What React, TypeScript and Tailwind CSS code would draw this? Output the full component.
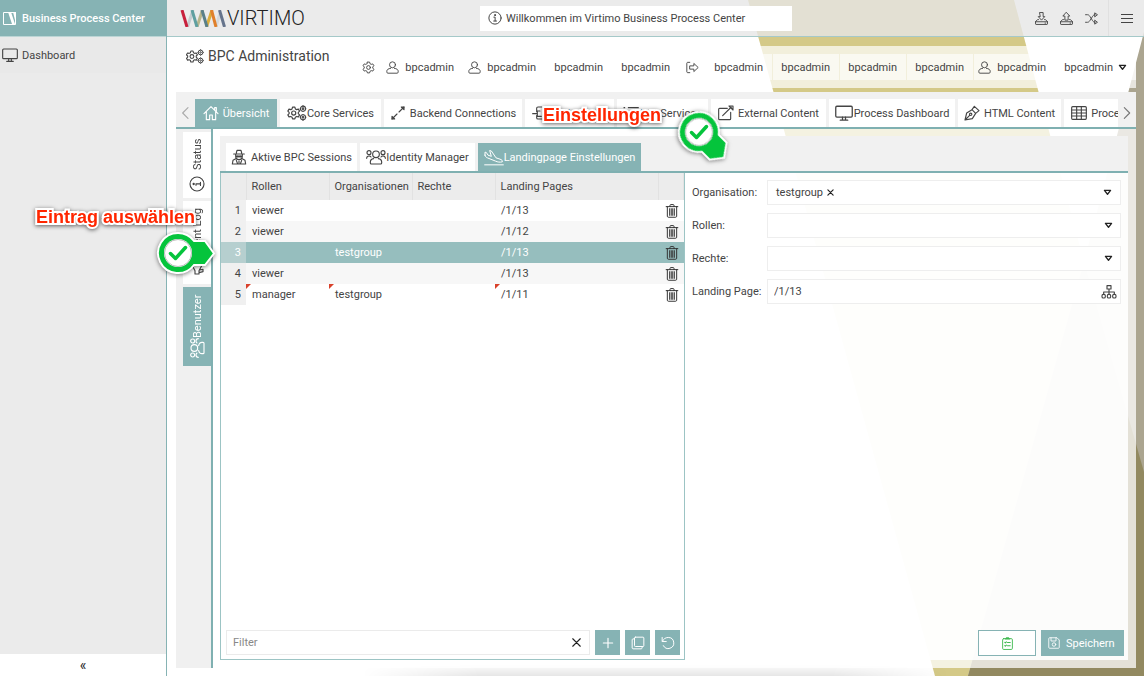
import { useState } from 'react';
import type { ReactNode } from 'react';

type IconProps = { className?: string; children?: ReactNode };

// base for all line icons, 24er grid
const Svg = ({ className = 'size-4', children }: IconProps) => (
    <svg viewBox="0 0 24 24" fill="none" stroke="currentColor" strokeWidth="1.7" strokeLinecap="round" strokeLinejoin="round" className={`shrink-0 ${className}`} aria-hidden="true">
        {children}
    </svg>
);

const GEAR = 'M10 2h4l.8 3 2.2 1.2 3-.8 2 3.4-2.2 2.2v2l2.2 2.2-2 3.4-3-.8-2.2 1.2-.8 3h-4l-.8-3L7 17.800l-3 .8-2-3.400L4.200 13v-2L2 8.800l2-3.400 3 .8L9.200 5z';

const Gear = ({ className }: IconProps) => (
    <Svg className={className}>
        <path d={GEAR} />
        <circle cx="12" cy="12" r="3.5" />
    </Svg>
);

const Gears = ({ className = 'h-4 w-[19px]' }: IconProps) => (
    <svg viewBox="0 0 29 24" fill="none" stroke="currentColor" strokeWidth="1.600" strokeLinejoin="round" className={`shrink-0 ${className}`} aria-hidden="true">
        <g transform="translate(-1 1.500) scale(.88)">
            <path d={GEAR} strokeWidth="2" />
            <circle cx="12" cy="12" r="3.5" strokeWidth="2" />
        </g>
        <circle cx="23.500" cy="5.500" r="3.800" />
        <circle cx="23.500" cy="5.500" r="1.200" />
        <circle cx="23.500" cy="18.500" r="3.800" />
        <circle cx="23.500" cy="18.500" r="1.200" />
        <path d="M23.500.5v1.500M23.500 9v1.500M18.500 5.500H20M27 5.500h1.500M23.500 13.500V15M23.500 22v1.500M18.500 18.500H20M27 18.500h1.500" />
    </svg>
);

const User = ({ className }: IconProps) => (
    <Svg className={className}>
        <circle cx="12" cy="7" r="5.500" />
        <path d="M8.500 13.500C4 14 1.500 16 1.500 19v1.500c0 1.200.8 2 2 2h17c1.200 0 2-.8 2-2V19c0-3-2.500-5-7-5.500" />
    </Svg>
);

const Users = ({ className = 'h-4 w-5' }: IconProps) => (
    <svg viewBox="0 0 30 24" fill="none" stroke="currentColor" strokeWidth="1.700" strokeLinecap="round" className={`shrink-0 ${className}`} aria-hidden="true">
        <circle cx="15" cy="8" r="5" />
        <circle cx="4.500" cy="5.500" r="3" />
        <circle cx="25.500" cy="5.500" r="3" />
        <path d="M11.500 14.500c-3.500.5-5 2.500-5 5V21c0 1 .6 1.500 1.500 1.500h14c.9 0 1.500-.5 1.500-1.500v-1.500c0-2.500-1.500-4.500-5-5M1 14c0-2 1.200-3.500 3.500-3.500 1.300 0 2.300.5 3 1.500M29 14c0-2-1.200-3.500-3.500-3.500-1.300 0-2.300.5-3 1.500" />
    </svg>
);

const Monitor = ({ className }: IconProps) => (
    <Svg className={className}>
        <rect x="1" y="3" width="22" height="14.500" rx="1.500" />
        <path d="M10 17.500v3.500M14 17.500v3.500M7 21.500h10" />
    </Svg>
);

const House = ({ className }: IconProps) => (
    <Svg className={className}>
        <path d="M1.500 13L12 2.500 22.500 13M5 10v12h5v-7h4v7h5V10M17.500 7.500V4h2.500v6" />
    </Svg>
);

const Arrows = ({ className }: IconProps) => (
    <Svg className={className}>
        <path d="M3 21l7.500-7.500M13.500 10.500L21 3" />
        <path d="M17 3h4v4zM3 17v4h4z" fill="currentColor" />
    </Svg>
);

const Plug = ({ className }: IconProps) => (
    <Svg className={className}>
        <path d="M1 13h6M9 3h10v18H9c-1.500 0-2-1-2-2v-3M7 10V5c0-1.200.5-2 2-2M12 9H8v8h6" />
    </Svg>
);

const List = ({ className }: IconProps) => (
    <Svg className={className}>
        <path d="M8 4h15M8 12h15M8 20h15M1.500 4h1M1.500 12h1M1.500 20h1" />
    </Svg>
);

const External = ({ className }: IconProps) => (
    <Svg className={className}>
        <path d="M14 5H2.500C1.700 5 1 5.700 1 6.500v14c0 .8.700 1.500 1.500 1.500h15c.8 0 1.500-.7 1.500-1.500V11M7 16L20 3" />
        <path d="M16.500 1.500h6v6z" />
    </Svg>
);

const Pen = ({ className }: IconProps) => (
    <Svg className={className}>
        <path d="M1.500 22.500L4 12l8-5 5.500 5.500-5 8zM1.500 22.500l7-7M12 7l3.500-5 7 6.500-5 4" />
        <circle cx="10" cy="14" r="1.800" />
    </Svg>
);

const TableGrid = ({ className }: IconProps) => (
    <Svg className={className}>
        <rect x="1" y="2.500" width="22" height="19" rx="1.500" />
        <path d="M1 7.500h22M1 12h22M1 16.500h22M8.500 2.500v19M15.500 2.500v19" />
    </Svg>
);

const Spy = ({ className }: IconProps) => (
    <Svg className={className}>
        <path d="M8 6l1-4h6l1 4M4 7.500h16M7 8v3c0 3 2 5 5 5s5-2 5-5V8M7 11h10M8.500 14L3 17l-1 5.500h20L21 17l-5.500-3M8 17l2 5.500M16 17l-2 5.500M12 18v4" />
        <path d="M8.500 10.500h2.500v1.500H8.500zM13 10.500h2.500v1.500H13z" fill="currentColor" />
    </Svg>
);

const Plane = ({ className = 'h-[17px] w-5' }: IconProps) => (
    <svg viewBox="0 0 30 24" fill="none" stroke="currentColor" strokeWidth="1.500" strokeLinecap="round" strokeLinejoin="round" className={`shrink-0 ${className}`} aria-hidden="true">
        <path d="M1 23h28M1.500 8.500V4l2 .5 2.500 4 5 1.800L8.500 1.500l2.500.7 7 10.300 6 2c3 1 4 2.300 3.500 4-4 1-7 .3-10-1L5 12.500c-2-.8-3-2-3.500-4z" />
    </svg>
);

const Info = ({ className }: IconProps) => (
    <Svg className={className}>
        <circle cx="12" cy="12" r="10.500" />
        <path d="M10 10.500h2.200V17M9.800 17.200h4.800" />
        <circle cx="12" cy="7" r=".9" fill="currentColor" />
    </Svg>
);

const Megaphone = ({ className }: IconProps) => (
    <Svg className={className}>
        <path d="M3 9h5l11-6v18l-11-6H3zM5 15l1.500 6H10l-1-5M19 9c3 0 3 6 0 6" />
    </Svg>
);

const Inbox = ({ className, up }: IconProps & { up?: boolean }) => (
    <Svg className={className}>
        <path d="M6.500 14H5l-4 3.500V22c0 .6.400 1 1 1h20c.6 0 1-.4 1-1v-4.500L19 14h-1.500M1 18h22M18.500 20.500h1" />
        {up ? <path d="M12 1l6 6.500h-3V15H9V7.500H6z" /> : <path d="M9 1h6v7.500h3L12 15 6 8.500h3z" />}
    </Svg>
);

const Shuffle = ({ className }: IconProps) => (
    <Svg className={className}>
        <path d="M1 5h3.500c2 0 3 1 4.500 3l5 8c1.300 2 2.500 3 4.500 3M1 19h3.500c2 0 3-1 4.500-3l5-8c1.300-2 2.500-3 4.500-3" />
        <path d="M18.500 2L23 5l-4.500 3.500zM18.500 15.500L23 19l-4.500 3z" />
    </Svg>
);

const Logout = ({ className }: IconProps) => (
    <Svg className={className}>
        <path d="M7 2.500H3c-.8 0-1.500.7-1.500 1.500v16c0 .8.700 1.500 1.500 1.500h4M7.500 9h7V4.500L22.500 12l-8 7.500V15h-7z" />
    </Svg>
);

const Trash = ({ className }: IconProps) => (
    <Svg className={className}>
        <path d="M2 4.500h20M4 4.500V21c0 1 .7 1.700 1.700 1.700h12.600c1 0 1.700-.7 1.700-1.700V4.500M8.500 4.500V2.500c0-.9.600-1.500 1.500-1.500h4c.9 0 1.500.6 1.500 1.500v2M8 8v11.500M10.700 8v11.500M13.300 8v11.500M16 8v11.500" />
    </Svg>
);

const Sitemap = ({ className }: IconProps) => (
    <Svg className={className}>
        <path d="M9 2.500h6v5H9zM12 7.500v8M4 15.500v-3.500h16v3.500" />
        <rect x="1.500" y="15.500" width="5" height="5.500" rx="2" />
        <rect x="9.500" y="15.500" width="5" height="5.500" rx="2" />
        <rect x="17.500" y="15.500" width="5" height="5.500" rx="2" />
    </Svg>
);

const Triangle = () => (
    <svg viewBox="0 0 10 8" className="h-[7px] w-[9px] shrink-0" fill="none" stroke="#222" strokeWidth="1.500" strokeLinejoin="round" aria-hidden="true">
        <path d="M1.500 1.500h7L5 6z" />
    </svg>
);

const Cross = ({ className }: IconProps) => (
    <Svg className={className}>
        <path d="M3 3l18 18M21 3L3 21" strokeWidth="4" />
    </Svg>
);

// green check pin, the tip points to the right
const CheckPin = ({ className = '' }: IconProps) => (
    <svg viewBox="0 0 60 44" className={`pointer-events-none absolute h-11 w-[60px] drop-shadow-[0_1px_2px_rgba(0,0,0,0.5)] ${className}`} aria-hidden="true">
        <path d="M22 2a20 20 0 1 0 16 32h11l9-11.500L49 10H38A20 20 0 0 0 22 2z" fill="#05c43c" stroke="#fff" strokeWidth="2" />
        <circle cx="22" cy="22" r="14" fill="#fff" />
        <circle cx="22" cy="22" r="13.500" fill="none" stroke="#bbb" strokeWidth="1" />
    </svg>
);

const CheckMark = ({ className = '' }: IconProps) => (
    <svg viewBox="0 0 20 16" className={`pointer-events-none absolute h-4 w-5 ${className}`} fill="none" stroke="#05c43c" strokeWidth="3.500" strokeLinecap="round" strokeLinejoin="round" aria-hidden="true">
        <path d="M2.500 8.500L7.500 13.500 17.500 2.500" />
    </svg>
);

const Note = ({ className, children }: IconProps) => (
    <span className={`pointer-events-none absolute whitespace-nowrap font-['Liberation_Sans',Arial,sans-serif] text-lg leading-6 font-bold text-[#ff2600] [paint-order:stroke_fill] [-webkit-text-stroke:4px_#fff] drop-shadow-[0_1px_2px_rgba(0,0,0,0.6)] ${className}`}>
        {children}
    </span>
);

const modules = [
    { name: 'Übersicht', icon: <House className="size-4" />, width: 'w-[82px]', gap: 'gap-1' },
    { name: 'Core Services', icon: <Gears className="h-4 w-5" />, width: 'w-[101px]', gap: '' },
    { name: 'Backend Connections', icon: <Arrows className="size-4" />, width: 'w-[138px]', gap: 'gap-1' },
    { name: 'Deployment', icon: <Plug className="size-4" />, width: 'w-[89px]', gap: '' },
    { name: 'Log Services', icon: <List className="size-4" />, width: 'w-[91px]', gap: '' },
    { name: 'External Content', icon: <External className="size-4" />, width: 'w-[115px]', gap: 'gap-1' },
    { name: 'Process Dashboard', icon: <Monitor className="size-[18px]" />, width: 'w-[126px]', gap: 'gap-px' },
    { name: 'HTML Content', icon: <Pen className="size-4" />, width: 'w-[103px]', gap: 'gap-1' },
    { name: 'Process Monitoring', icon: <TableGrid className="size-4" />, width: 'w-[130px]', gap: 'gap-1' },
];

const userTabs = [
    { name: 'Aktive BPC Sessions', icon: <Spy className="size-4" />, width: 'w-[131px]', gap: 'gap-1' },
    { name: 'Identity Manager', icon: <Users className="h-4 w-5" />, width: 'w-[115px]', gap: '' },
    { name: 'Landingpage Einstellungen', icon: <Plane />, width: 'w-[163px]', gap: '' },
];

const rows = [
    { role: 'viewer', org: '', page: '/1/13', dirty: false },
    { role: 'viewer', org: '', page: '/1/12', dirty: false },
    { role: '', org: 'testgroup', page: '/1/13', dirty: false },
    { role: 'viewer', org: '', page: '/1/13', dirty: false },
    { role: 'manager', org: 'testgroup', page: '/1/11', dirty: true },
];

type TabProps = { tab: (typeof modules)[number]; active: boolean; onClick?: () => void };

const Tab = ({ tab, active, onClick }: TabProps) => (
    <button
        type="button"
        onClick={onClick}
        className={`flex h-7 shrink-0 items-center justify-center whitespace-nowrap ${tab.width} ${tab.gap} ${active ? 'bg-[#86b3b4] text-white' : 'bg-white'}`}
    >
        {tab.icon}
        {tab.name}
    </button>
);

const barCell = 'flex h-[26px] items-center justify-end bg-white/60';

const UserCell = () => (
    <button type="button" className={`${barCell} w-[81px] gap-[6px] pr-[9px]`}>
        <User className="size-[13px]" />
        bpcadmin
    </button>
);

const TextCell = () => (
    <button type="button" className={`${barCell} w-[66px] pr-[9px]`}>bpcadmin</button>
);

const Mark = () => (
    <svg viewBox="0 0 5 5" className="absolute top-0 left-0 size-[5px]" aria-hidden="true">
        <path d="M0 0h5L0 5z" fill="#d9412b" />
    </svg>
);

const fieldBox = 'h-[25px] w-full border border-[#eeeeee] bg-white px-[6px] outline-none';

const SelectField = ({ id, label }: { id: string; label: string }) => (
    <div className="flex items-center">
        <label htmlFor={id} className="w-[75px] shrink-0">{label}</label>
        <div className="relative flex-1">
            <select id={id} className={`${fieldBox} block appearance-none`} defaultValue="">
                <option value=""></option>
            </select>
            <span className="pointer-events-none absolute inset-y-0 right-2 flex items-center"><Triangle /></span>
        </div>
    </div>
);

const App = () => {
    const [activeModule, setActiveModule] = useState('Übersicht');
    const [activeTab, setActiveTab] = useState('Landingpage Einstellungen');
    const [selected, setSelected] = useState(2);
    const [filter, setFilter] = useState('');

    return (
        <div className="relative flex min-h-screen overflow-hidden bg-white font-[Roboto,sans-serif] text-[11px] leading-[17px] text-[#444]">
            {/* sidebar */}
            <aside className="flex w-[167px] shrink-0 flex-col border-r border-[#86b3b4] bg-[#ebebeb]">
                <div className="flex h-9 items-center gap-[6px] bg-[#86b3b4] pl-[3px] font-medium text-white">
                    <svg viewBox="0 0 13 13" className="size-[13px]" aria-hidden="true">
                        <path d="M.5.500h12v12H.5z" fill="none" stroke="#fff" />
                        <path d="M5 0h3l4 12H9zM10 0h3v12z" fill="#fff" />
                    </svg>
                    Business Process Center
                </div>
                <nav className="border-t border-[#bcd5d5]">
                    <a href="#dashboard" className="flex h-9 items-center gap-1 bg-[#e9e9e9] pl-[2px]">
                        <Monitor className="size-4" />
                        Dashboard
                    </a>
                </nav>
                <button type="button" className="mt-auto h-[22px] bg-white text-sm text-[#222]">«</button>
            </aside>

            <div className="relative isolate flex min-w-0 flex-1 flex-col">
                {/* background shapes */}
                <svg viewBox="0 0 977 676" preserveAspectRatio="none" className="absolute inset-0 -z-10 h-full w-full" aria-hidden="true">
                    <path d="M581 0h266l70 262-116 414h-33z" fill="#d4c987" />
                    <path d="M977 32v644H801l116-414z" fill="#aba590" />
                    <path d="M917 262l60 210v204H801z" fill="#928960" />
                </svg>
                <div className="absolute bottom-0 left-[20%] -z-10 h-3 w-3/5 bg-linear-to-b from-transparent to-black/10 [mask-image:linear-gradient(to_right,transparent,black_20%,black_80%,transparent)]" />

                <header className="flex h-[37px] items-center justify-between border-b border-[#a5c9c9] bg-[#e6e6e6]/80">
                    <div className="flex w-[313px] items-center gap-px pl-[13px]">
                        <svg viewBox="0 0 46 17" className="h-[17px] w-[46px]" fill="none" strokeWidth="3" aria-hidden="true">
                            <path d="M7.500 17L13 0" stroke="#c3ccd0" />
                            <path d="M2 0l5 17" stroke="#c8203c" />
                            <path d="M17 17L22.500 0" stroke="#b8b68c" />
                            <path d="M12 0l5 17" stroke="#5f9fa0" />
                            <path d="M26.500 17L32 0" stroke="#dcae3c" />
                            <path d="M22 0l5 17" stroke="#5a8088" />
                            <path d="M36 17L40 3" stroke="#d5dade" />
                            <path d="M31.500 0l4.500 17" stroke="#e0802c" />
                            <path d="M39.500 0l5 17" stroke="#66748c" />
                        </svg>
                        <span className="text-xl font-light text-[#222]">VIRTIMO</span>
                    </div>
                    <div className="flex h-[25px] w-[312px] items-center gap-1 bg-white pl-2">
                        <Info className="size-[14px]" />
                        Willkommen im Virtimo Business Process Center
                    </div>
                    <div className="flex flex-1 items-center justify-end">
                        <button type="button" aria-label="Import" className="px-[6px]"><Inbox className="size-[13px]" /></button>
                        <button type="button" aria-label="Export" className="px-[6px]"><Inbox up className="size-[13px]" /></button>
                        <button type="button" aria-label="Wechseln" className="px-[6px]"><Shuffle className="size-[13px]" /></button>
                        <button type="button" aria-label="Menü" className="ml-1 flex h-9 w-9 items-center justify-center border-l border-[#e0e0e0]">
                            <svg viewBox="0 0 12 11" className="h-[11px] w-3" stroke="currentColor" aria-hidden="true">
                                <path d="M0 1.500h12M0 5.500h12M0 9.500h12" />
                            </svg>
                        </button>
                    </div>
                </header>

                {/* title and toolbar */}
                <div className="mx-2 mt-[9px] mb-1 flex h-[42px] items-start justify-between bg-white/70 pl-[11px]">
                    <h1 className="flex items-center gap-1 whitespace-nowrap text-sm leading-5">
                        <Gears className="h-[15px] w-[18px]" />
                        BPC Administration
                    </h1>
                    <div className="mt-2 flex gap-px">
                        <button type="button" aria-label="Einstellungen" className={`${barCell} w-6 pr-[6px]`}><Gear className="size-[13px]" /></button>
                        <UserCell />
                        <UserCell />
                        <TextCell />
                        <TextCell />
                        <button type="button" aria-label="Abmelden" className={`${barCell} w-[25px] pr-[6px]`}><Logout className="size-[13px]" /></button>
                        <TextCell />
                        <TextCell />
                        <TextCell />
                        <TextCell />
                        <UserCell />
                        <button type="button" className={`${barCell} w-20 gap-[5px] pr-[9px]`}>
                            bpcadmin
                            <Triangle />
                        </button>
                    </div>
                </div>

                <div className="mx-2 mb-2 ml-[9px] flex flex-1 flex-col bg-white/75">
                    {/* modules */}
                    <div className="flex h-[37px] items-end border-b-2 border-[#7fb0b1] bg-[#f1f1f1]">
                        <button type="button" aria-label="Zurück" className="flex h-7 w-[19px] shrink-0 items-center justify-center text-[#aaa]">
                            <Svg className="size-4"><path d="M15 4l-8 8 8 8" /></Svg>
                        </button>
                        <div className="flex min-w-0 flex-1 gap-[3px] overflow-hidden">
                            {modules.map((m) => (
                                <Tab key={m.name} tab={m} active={m.name === activeModule} onClick={() => setActiveModule(m.name)} />
                            ))}
                        </div>
                        <button type="button" aria-label="Weiter" className="flex h-7 w-[18px] shrink-0 items-center justify-center text-[#777]">
                            <Svg className="size-4"><path d="M8 4l8 8-8 8" /></Svg>
                        </button>
                    </div>

                    <div className="flex flex-1">
                        {/* vertical tabs */}
                        <div className="flex w-[37px] shrink-0 flex-col items-end gap-[3px] border-r-2 border-[#7fb0b1] bg-[#f0f0f0] pt-[3px]">
                            <button type="button" className="flex h-[66px] w-7 rotate-180 items-center justify-center gap-[6px] bg-white [writing-mode:vertical-rl]">
                                <Info className="size-4 rotate-90" />
                                Status
                            </button>
                            <button type="button" className="flex h-[83px] w-7 rotate-180 items-center justify-center gap-1 bg-white [writing-mode:vertical-rl]">
                                <Megaphone className="size-4 rotate-90" />
                                Event Log
                            </button>
                            <button type="button" className="flex h-[79px] w-7 rotate-180 items-center justify-center bg-[#86b3b4] text-white [writing-mode:vertical-rl]">
                                <Users className="size-5 rotate-90" />
                                Benutzer
                            </button>
                        </div>

                        <div className="mt-[7px] mr-2 mb-2 ml-[7px] flex min-w-0 flex-1 flex-col bg-white/90">
                            <div className="flex h-[37px] items-end gap-[3px] border-b-2 border-[#7fb0b1] bg-[#f1f1f1] pl-[6px]">
                                {userTabs.map((t) => (
                                    <Tab key={t.name} tab={t} active={t.name === activeTab} onClick={() => setActiveTab(t.name)} />
                                ))}
                            </div>

                            <div className="flex flex-1">
                                {/* grid */}
                                <section className="flex w-[465px] max-w-[60%] shrink-0 flex-col border border-t-0 border-[#9cc4c4] bg-white">
                                    <table className="w-full table-fixed text-left">
                                        <thead>
                                            <tr className="h-[27px] bg-[#ececec] [&>th]:border-r [&>th]:border-[#e2e2e2] [&>th]:pl-[5px] [&>th]:font-normal">
                                                <th className="w-[25px]"></th>
                                                <th className="w-[83px]">Rollen</th>
                                                <th className="w-[83px]">Organisationen</th>
                                                <th className="w-[83px]">Rechte</th>
                                                <th>Landing Pages</th>
                                                <th className="w-[25px]"></th>
                                            </tr>
                                        </thead>
                                        <tbody>
                                            {rows.map((row, i) => (
                                                <tr
                                                    key={i}
                                                    onClick={() => setSelected(i)}
                                                    className={`h-[21px] [&>td]:relative [&>td]:p-0 [&>td]:pl-[6px] ${i === selected ? 'bg-[#96bebe] text-white' : i % 2 ? 'bg-[#f7f7f7]' : 'bg-white'}`}
                                                >
                                                    <td className={i === selected ? 'bg-[#b6cfcf] text-right' : 'bg-[#f0f0f0] text-right'}>
                                                        <span className="pr-[5px]">{i + 1}</span>
                                                    </td>
                                                    <td>{row.dirty && <Mark />}{row.role}</td>
                                                    <td>{row.dirty && <Mark />}{row.org}</td>
                                                    <td></td>
                                                    <td>{row.dirty && <Mark />}{row.page}</td>
                                                    <td>
                                                        <button type="button" aria-label="Löschen" className="block text-[#333]"><Trash className="size-[14px]" /></button>
                                                    </td>
                                                </tr>
                                            ))}
                                        </tbody>
                                    </table>
                                    <div className="mt-auto flex gap-[5px] p-1 pl-[5px]">
                                        <div className="flex h-[25px] min-w-0 flex-1 items-center border border-[#ebebeb] pr-2">
                                            <input
                                                aria-label="Filter"
                                                placeholder="Filter"
                                                value={filter}
                                                onChange={(e) => setFilter(e.target.value)}
                                                className="min-w-0 flex-1 pl-[6px] outline-none placeholder:text-[#888]"
                                            />
                                            <button type="button" aria-label="Filter leeren" onClick={() => setFilter('')} className="text-[#222]">
                                                <Svg className="size-[9px]"><path d="M2 2l20 20M22 2L2 22" strokeWidth="3" /></Svg>
                                            </button>
                                        </div>
                                        <button type="button" aria-label="Neu" className="flex size-[25px] items-center justify-center bg-[#86b3b4] text-white">
                                            <Svg className="size-4"><path d="M12 5v14M5 12h14" /></Svg>
                                        </button>
                                        <button type="button" aria-label="Kopieren" className="flex size-[25px] items-center justify-center bg-[#86b3b4] text-white">
                                            <Svg className="size-[14px]">
                                                <rect x="6" y="2" width="16" height="16" rx="1.500" />
                                                <path d="M6 5H3.500c-.8 0-1.500.7-1.500 1.500v14c0 .8.700 1.500 1.500 1.500h14c.8 0 1.500-.7 1.500-1.500V18" />
                                            </Svg>
                                        </button>
                                        <button type="button" aria-label="Zurücksetzen" className="flex size-[25px] items-center justify-center bg-[#86b3b4] text-white">
                                            <Svg className="size-[14px]"><path d="M2 2.500v7h7M2.500 9C4 5 8 2.500 12.500 2.500a9.500 9.500 0 1 1-8.500 14" /></Svg>
                                        </button>
                                    </div>
                                </section>

                                {/* form */}
                                <section className="flex min-w-0 flex-1 flex-col pt-[7px] pb-1 pl-[7px]">
                                    <div className="flex flex-col gap-2 pr-[7px]">
                                        <div className="flex items-center">
                                            <label htmlFor="organisation" className="w-[75px] shrink-0">Organisation:</label>
                                            <div className="flex h-[25px] flex-1 items-center border border-[#eeeeee] bg-white px-2">
                                                <span>testgroup</span>
                                                <button type="button" aria-label="testgroup entfernen" className="pl-1 text-[#222]"><Cross className="size-[7px]" /></button>
                                                <input id="organisation" className="min-w-0 flex-1 outline-none" />
                                                <Triangle />
                                            </div>
                                        </div>
                                        <SelectField id="rollen" label="Rollen:" />
                                        <SelectField id="rechte" label="Rechte:" />
                                        <div className="flex items-center">
                                            <label htmlFor="landing" className="w-[75px] shrink-0">Landing Page:</label>
                                            <div className="relative flex-1">
                                                <input id="landing" defaultValue="/1/13" className={`${fieldBox} block`} />
                                                <button type="button" aria-label="Seite wählen" className="absolute inset-y-0 right-1 flex items-center"><Sitemap className="size-4" /></button>
                                            </div>
                                        </div>
                                    </div>
                                    <div className="mt-auto flex justify-end gap-[5px] pr-1">
                                        <button type="button" aria-label="Einfügen" className="flex h-[26px] w-[58px] items-center justify-center border border-[#86b3b4] bg-white text-[#3fb950]">
                                            <Svg className="size-[13px]">
                                                <rect x="3" y="3" width="18" height="20" rx="2" />
                                                <path d="M8 3.500h8M10 1.500h4M7 10l1 1 2-2M12 10h5M7 16l1 1 2-2M12 16h5" strokeWidth="2" />
                                            </Svg>
                                        </button>
                                        <button type="button" className="flex h-[26px] w-[83px] items-center gap-[6px] bg-[#86b3b4] pl-[7px] text-white">
                                            <Svg className="size-[12px]">
                                                <path d="M1.500 3c0-.8.700-1.500 1.500-1.500h15L22.500 6v15c0 .8-.7 1.500-1.500 1.500H3c-.8 0-1.500-.7-1.500-1.500zM6 1.500V8h10V1.500" />
                                                <circle cx="12" cy="15" r="3.500" />
                                            </Svg>
                                            Speichern
                                        </button>
                                    </div>
                                </section>
                            </div>
                        </div>
                    </div>
                </div>
            </div>

            {/* hints on top of the page */}
            <Note className="top-[103px] left-[543px]">Einstellungen</Note>
            <CheckPin className="top-[110px] left-[677px] origin-[22px_22px] rotate-45" />
            <CheckMark className="top-[124px] left-[689px]" />
            <Note className="top-[205px] left-[36px]">Eintrag auswählen</Note>
            <CheckPin className="top-[231px] left-[156px]" />
            <CheckMark className="top-[245px] left-[168px]" />
        </div>
    );
};

export default App;
